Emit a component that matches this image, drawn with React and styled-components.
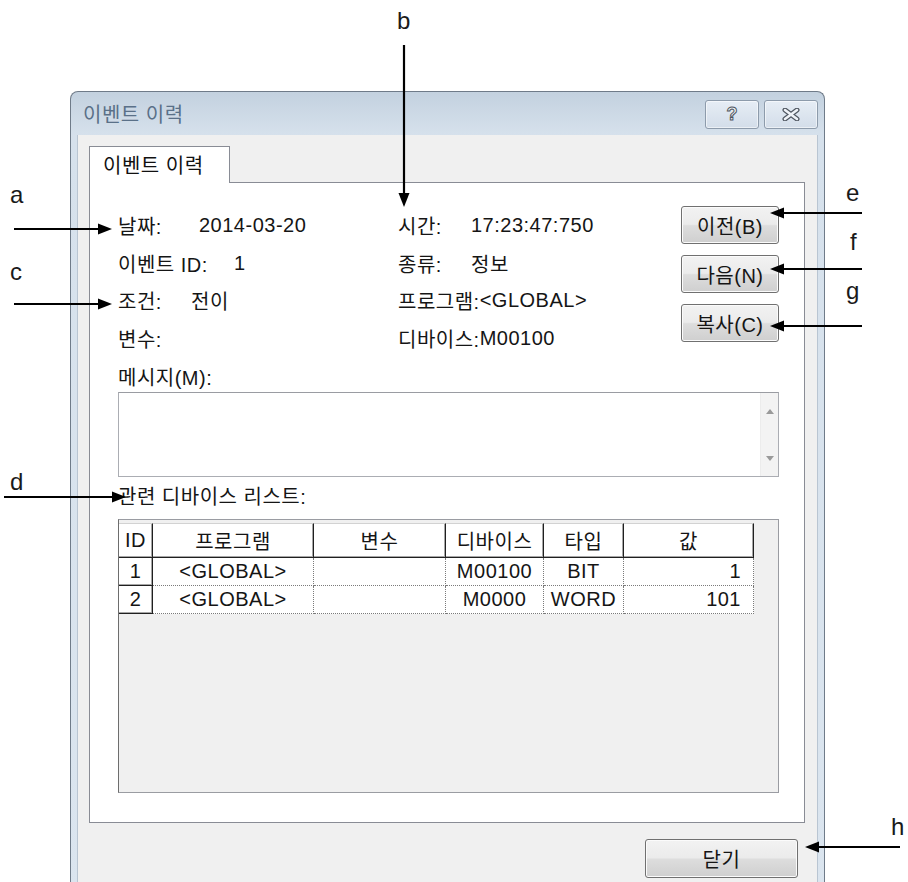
import styled, { createGlobalStyle } from "styled-components";

const FONT = `"Liberation Sans", "Noto Sans CJK KR", sans-serif`;

const GlobalStyle = createGlobalStyle`
  html, body {
    margin: 0;
    padding: 0;
    background: #ffffff;
  }
  body {
    font-family: ${FONT};
  }
`;

const Page = styled.div`
  position: relative;
  width: 908px;
  height: 882px;
  overflow: hidden;
  background: #ffffff;
  padding: 91px 0 0 70px;
  box-sizing: border-box;
  font-family: ${FONT};
`;

const Window = styled.div`
  width: 755px;
  height: 830px;
  box-sizing: border-box;
  border: 1px solid #6f7b89;
  border-bottom: none;
  border-radius: 8px 8px 0 0;
  background: linear-gradient(#c3d1df 0px, #d6e1ec 43px, #dbe5ef 100%);
  padding: 0 6px;
  display: flex;
  flex-direction: column;
`;

const TitleBar = styled.div`
  height: 43px;
  display: flex;
  justify-content: space-between;
  align-items: flex-start;
  padding-left: 6px;
`;

const Title = styled.div`
  font-size: 20px;
  line-height: 46px;
  color: #5a7088;
  letter-spacing: 0.5px;
`;

const CaptionGroup = styled.div`
  display: flex;
  gap: 5px;
  margin-top: 8px;
`;

const CaptionButton = styled.div`
  width: 54px;
  height: 29px;
  box-sizing: border-box;
  border: 1px solid #8d9bab;
  border-radius: 3px;
  background: linear-gradient(#e6edf5, #d3dde9);
  box-shadow: inset 0 0 0 1px rgba(255, 255, 255, 0.55);
  display: flex;
  align-items: center;
  justify-content: center;
  font-family: "Liberation Sans", sans-serif;
  font-weight: bold;
  font-size: 18px;
  color: #eef2f7;
  -webkit-text-stroke: 1px #4f5660;
`;

const Body = styled.div`
  flex: 1;
  background: #f0f0f0;
  padding: 11px 12px 0 11px;
  border-left: 1px solid #b9c5d2;
  border-right: 1px solid #b9c5d2;
`;

const TabStrip = styled.div`
  display: flex;
`;

const Tab = styled.div`
  position: relative;
  z-index: 1;
  width: 141px;
  height: 37px;
  box-sizing: border-box;
  margin-bottom: -1px;
  border: 1px solid #898c95;
  border-bottom: none;
  background: #ffffff;
  padding-left: 13px;
  font-size: 20px;
  line-height: 38px;
  letter-spacing: 0.5px;
  color: #111111;
`;

const Panel = styled.div`
  height: 641px;
  box-sizing: border-box;
  border: 1px solid #898c95;
  background: #ffffff;
  padding: 24px 25px 0 28px;
  display: flex;
  flex-direction: column;
`;

const InfoArea = styled.div`
  display: grid;
  grid-template-columns: 280px 283px 98px;
`;

const FieldColumn = styled.div`
  display: flex;
  flex-direction: column;
`;

const Field = styled.div`
  height: 37.5px;
  display: flex;
  align-items: center;
  font-size: 20px;
  letter-spacing: 0.5px;
  color: #151515;
  white-space: nowrap;
`;

const Key = styled.span`
  display: inline-block;
  width: ${(p) => (p.$w ? `${p.$w}px` : "auto")};
`;

const ButtonColumn = styled.div`
  display: flex;
  flex-direction: column;
  gap: 11px;
  margin-top: -1px;
`;

const Button = styled.div`
  width: ${(p) => p.$w || 98}px;
  height: ${(p) => p.$h || 38}px;
  box-sizing: border-box;
  border: 1px solid #707070;
  border-radius: 3px;
  background: linear-gradient(#f2f2f2 0%, #ebebeb 48%, #dddddd 52%, #cfcfcf 100%);
  box-shadow: inset 0 0 0 1px #fbfbfb;
  display: flex;
  align-items: center;
  justify-content: center;
  font-size: 20px;
  letter-spacing: 0.5px;
  color: #151515;
`;

const SectionLabel = styled.div`
  font-size: 20px;
  line-height: 28px;
  letter-spacing: 0.5px;
  color: #151515;
  margin: ${(p) => p.$margin};
`;

const MessageBox = styled.div`
  height: 85px;
  box-sizing: border-box;
  border: 1px solid #abadb3;
  border-top-color: #9a9ca2;
  background: #ffffff;
  display: flex;
  justify-content: flex-end;
`;

const ScrollTrack = styled.div`
  width: 17px;
  background: #f3f3f3;
  border-left: 1px solid #ececec;
  display: flex;
  flex-direction: column;
  justify-content: space-between;
  align-items: center;
  padding: 16px 0 15px;
`;

const ListBox = styled.div`
  height: 274px;
  box-sizing: border-box;
  border: 1px solid #9a9ca2;
  border-left-color: #6d6d6d;
  background: #f0f0f0;
  padding-top: 3px;
`;

const Grid = styled.table`
  border-collapse: separate;
  border-spacing: 0;
  table-layout: fixed;
  width: 635px;
  font-size: 20px;
  letter-spacing: 0.5px;
  color: #151515;
`;

const HeadCell = styled.th`
  height: 33px;
  padding: 0;
  font-weight: normal;
  background: #ffffff;
  border-top: 1px solid #d2d2d2;
  border-right: 1px solid #202020;
  border-bottom: 1px solid #202020;
  box-shadow: inset -1px -1px 0 #a6a6a6;
  text-align: center;
  white-space: nowrap;
  overflow: hidden;
`;

const IdCell = styled.td`
  height: 27px;
  padding: 0;
  background: #ffffff;
  border-right: 1px solid #202020;
  border-bottom: 1px solid #202020;
  box-shadow: inset -1px -1px 0 #a6a6a6;
  text-align: center;
`;

const Cell = styled.td`
  height: 27px;
  padding: 0 ${(p) => (p.$align === "right" ? "12px" : "4px")} 0 4px;
  background: #ffffff;
  border-right: 1px dotted #7a7a7a;
  border-bottom: 1px dotted #7a7a7a;
  text-align: ${(p) => p.$align || "center"};
  white-space: nowrap;
`;

const Footer = styled.div`
  display: flex;
  justify-content: flex-end;
  padding: 16px 7px 0 0;
`;

const Overlay = styled.svg`
  position: absolute;
  left: 0;
  top: 0;
  pointer-events: none;
`;

const Mark = styled.span`
  position: absolute;
  left: ${(p) => p.$x}px;
  top: ${(p) => p.$y - 15}px;
  font-family: "Liberation Sans", sans-serif;
  font-size: 24px;
  line-height: 30px;
  color: #1a1a1a;
`;

const columns = [
  { title: "ID", w: 34 },
  { title: "프로그램", w: 161 },
  { title: "변수", w: 132 },
  { title: "디바이스", w: 98 },
  { title: "타입", w: 80 },
  { title: "값", w: 130 },
];

const rows = [
  ["1", "<GLOBAL>", "", "M00100", "BIT", "1"],
  ["2", "<GLOBAL>", "", "M0000", "WORD", "101"],
];

const arrows = [
  [14, 229, 112, 229],
  [404, 45, 404, 207],
  [14, 304, 112, 304],
  [4, 497, 126, 497],
  [862, 213, 770, 213],
  [862, 269, 770, 269],
  [862, 326, 770, 326],
  [900, 847, 805, 847],
];

const marks = [
  ["a", 10, 195],
  ["b", 397, 21],
  ["c", 10, 272],
  ["d", 10, 482],
  ["e", 846, 193],
  ["f", 850, 242],
  ["g", 846, 291],
  ["h", 891, 827],
];

const Arrow = ({ x1, y1, x2, y2 }) => {
  const len = Math.hypot(x2 - x1, y2 - y1);
  const dx = (x2 - x1) / len;
  const dy = (y2 - y1) / len;
  const bx = x2 - dx * 14;
  const by = y2 - dy * 14;
  const px = -dy * 5.5;
  const py = dx * 5.5;
  return (
    <g>
      <line x1={x1} y1={y1} x2={bx + dx} y2={by + dy} stroke="#000" strokeWidth="2.2" />
      <polygon
        points={`${x2},${y2} ${bx + px},${by + py} ${bx - px},${by - py}`}
        fill="#000"
      />
    </g>
  );
};

const CloseGlyph = () => (
  <svg width="18" height="13" viewBox="0 0 18 13">
    <path d="M3 2 L15 11 M15 2 L3 11" stroke="#4f5660" strokeWidth="5" strokeLinecap="round" />
    <path d="M3 2 L15 11 M15 2 L3 11" stroke="#eef2f7" strokeWidth="2.6" strokeLinecap="round" />
  </svg>
);

const Triangle = ({ up }) => (
  <svg width="8" height="5" viewBox="0 0 8 5">
    <polygon points={up ? "4,0 8,5 0,5" : "0,0 8,0 4,5"} fill="#9a9a9a" />
  </svg>
);

const App = () => {
  return (
    <>
      <GlobalStyle />
      <Page>
        <Window>
          <TitleBar>
            <Title>이벤트 이력</Title>
            <CaptionGroup>
              <CaptionButton>?</CaptionButton>
              <CaptionButton>
                <CloseGlyph />
              </CaptionButton>
            </CaptionGroup>
          </TitleBar>
          <Body>
            <TabStrip>
              <Tab>이벤트 이력</Tab>
            </TabStrip>
            <Panel>
              <InfoArea>
                <FieldColumn>
                  <Field>
                    <Key $w={81}>날짜:</Key>
                    <span>2014-03-20</span>
                  </Field>
                  <Field>
                    <Key $w={116}>이벤트 ID:</Key>
                    <span>1</span>
                  </Field>
                  <Field>
                    <Key $w={73}>조건:</Key>
                    <span>전이</span>
                  </Field>
                  <Field>
                    <Key>변수:</Key>
                  </Field>
                </FieldColumn>
                <FieldColumn>
                  <Field>
                    <Key $w={73}>시간:</Key>
                    <span>17:23:47:750</span>
                  </Field>
                  <Field>
                    <Key $w={73}>종류:</Key>
                    <span>정보</span>
                  </Field>
                  <Field>
                    <Key>프로그램: </Key>
                    <span>&lt;GLOBAL&gt;</span>
                  </Field>
                  <Field>
                    <Key>디바이스:</Key>
                    <span>M00100</span>
                  </Field>
                </FieldColumn>
                <ButtonColumn>
                  <Button>이전(B)</Button>
                  <Button>다음(N)</Button>
                  <Button>복사(C)</Button>
                </ButtonColumn>
              </InfoArea>

              <SectionLabel $margin="7px 0 0">메시지(M):</SectionLabel>
              <MessageBox>
                <ScrollTrack>
                  <Triangle up />
                  <Triangle />
                </ScrollTrack>
              </MessageBox>

              <SectionLabel $margin="6px 0 8px">관련 디바이스 리스트:</SectionLabel>
              <ListBox>
                <Grid>
                  <colgroup>
                    {columns.map((c) => (
                      <col key={c.title} style={{ width: c.w }} />
                    ))}
                  </colgroup>
                  <thead>
                    <tr>
                      {columns.map((c) => (
                        <HeadCell key={c.title}>{c.title}</HeadCell>
                      ))}
                    </tr>
                  </thead>
                  <tbody>
                    {rows.map((r) => (
                      <tr key={r[0]}>
                        <IdCell>{r[0]}</IdCell>
                        <Cell>{r[1]}</Cell>
                        <Cell>{r[2]}</Cell>
                        <Cell>{r[3]}</Cell>
                        <Cell>{r[4]}</Cell>
                        <Cell $align="right">{r[5]}</Cell>
                      </tr>
                    ))}
                  </tbody>
                </Grid>
              </ListBox>
            </Panel>
            <Footer>
              <Button $w={153} $h={39}>닫기</Button>
            </Footer>
          </Body>
        </Window>

        <Overlay width="908" height="882" viewBox="0 0 908 882">
          {arrows.map(([x1, y1, x2, y2], i) => (
            <Arrow key={i} x1={x1} y1={y1} x2={x2} y2={y2} />
          ))}
        </Overlay>
        {marks.map(([t, x, y]) => (
          <Mark key={t} $x={x} $y={y}>
            {t}
          </Mark>
        ))}
      </Page>
    </>
  );
};

export default App;
